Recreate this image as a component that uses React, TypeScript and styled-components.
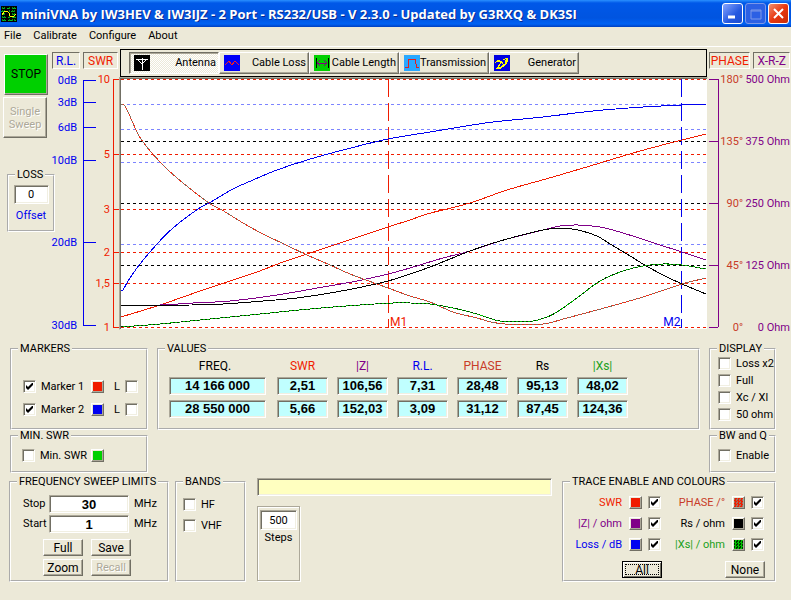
import React, { useState } from 'react';
import styled, { createGlobalStyle, css } from 'styled-components';

const C = {
  face: '#ECE9D8',
  light: '#FFFFFF',
  mid: '#ACA899',
  dark: '#716F64',
  red: '#F01C00',
  brown: '#C83C28',
  blue: '#0000F0',
  paleBlue: '#7C84FF',
  purple: '#800088',
  green: '#00D000',
  leaf: '#20A020',
};

const GlobalStyle = createGlobalStyle`
  html, body { margin: 0; padding: 0; background: ${C.face}; }
  *, *::before, *::after { box-sizing: border-box; }
  body, button, input, table { font-family: Roboto, "Liberation Sans", sans-serif; font-size: 11px; line-height: 12px; color: #000; }
`;

const sunken = css`
  border: 1px solid;
  border-color: ${C.mid} ${C.light} ${C.light} ${C.mid};
  box-shadow: inset 1px 1px ${C.dark}, inset -1px -1px #f1efe2;
`;
const raised = css`
  border: 1px solid;
  border-color: ${C.light} ${C.dark} ${C.dark} ${C.light};
  box-shadow: inset -1px -1px ${C.mid};
`;
const etched = css`
  border: 1px solid ${C.mid};
  box-shadow: 1px 1px #fff, inset 1px 1px #fff;
`;

const Window = styled.main`
  min-height: 100vh;
  background: ${C.face};
  display: flex;
  flex-direction: column;
`;

/* ---- title bar and menu ---- */
const TitleBar = styled.header`
  height: 27px;
  display: flex;
  align-items: center;
  gap: 4px;
  padding: 0 2px 0 1px;
  background: linear-gradient(#2a90ff 0, #0058e8 3px, #0054e0 18px, #0062f4 24px, #0040c0 27px);
`;
const Title = styled.h1`
  flex: 1;
  margin: 0;
  font-family: "Open Sans", sans-serif;
  font-size: 13px;
  line-height: 16px;
  font-weight: 700;
  color: #fff;
  text-shadow: 1px 1px #0a2a90;
  white-space: nowrap;
  overflow: hidden;
`;
const WindowButtons = styled.div`
  display: flex;
  gap: 2px;
`;
const WindowButton = styled.button<{ $bg: string; $dim?: boolean }>`
  width: 21px;
  height: 21px;
  padding: 0;
  border: 1px solid ${p => (p.$dim ? '#7c98e8' : '#fff')};
  border-radius: 3px;
  background: ${p => p.$bg};
  svg { display: block; margin: auto; }
`;
const Menu = styled.nav`
  display: flex;
  gap: 12px;
  height: 20px;
  padding: 3px 4px 0;
  border-bottom: 1px solid ${C.light};
`;
const MenuItem = styled.a`
  color: #000;
  text-decoration: none;
`;

/* ---- instrument area ---- */
const Instrument = styled.section`
  display: flex;
  align-items: flex-start;
  margin-bottom: 10px;
`;
const Side = styled.div`
  width: 51px;
  padding: 7px 0 0 3px;
  display: flex;
  flex-direction: column;
  gap: 2px;
  flex: none;
`;
const BigButton = styled.button<{ $go?: boolean }>`
  ${raised}
  width: 44px;
  height: 41px;
  margin-left: ${p => (p.$go ? '1px' : '0')};
  padding: 0;
  font-size: ${p => (p.$go ? '12px' : '11px')};
  line-height: 13px;
  background: ${p => (p.$go ? C.green : C.face)};
  &:disabled { color: ${C.mid}; text-shadow: 1px 1px #fff; }
`;
const Group = styled.fieldset`
  margin: 0;
  padding: 0;
  min-width: 0;
  border: 2px groove #fff;
`;
const Legend = styled.legend<{ $indent?: string }>`
  margin-left: ${p => p.$indent ?? '6px'};
  padding: 0 2px;
  font-size: 11px;
  line-height: 12px;
  height: 12px;
  white-space: nowrap;
`;
const GroupBody = styled.div<{ $pad: string }>`
  padding: ${p => p.$pad};
`;
const LossGroup = styled(Group)`
  width: 48px;
  margin: 29px 0 0 4px;
  padding: 4px 0 8px;
  label { color: ${C.blue}; display: flex; flex-direction: column; align-items: center; gap: 6px; }
`;
const Field = styled.input<{ $w: string; $h?: string; $bold?: boolean; $bg?: string }>`
  ${sunken}
  width: ${p => p.$w};
  height: ${p => p.$h ?? '18px'};
  padding: 0 2px;
  text-align: center;
  background: ${p => p.$bg ?? '#fff'};
  ${p => p.$bold && css`font-family: "Liberation Sans", sans-serif; font-size: 13px; font-weight: 700;`}
`;
const AxisColumn = styled.div<{ $w: string }>`
  flex: none;
  width: ${p => p.$w};
  padding-top: 5px;
  svg { display: block; }
`;
const AxisHeads = styled.div`
  display: flex;
  gap: 3px;
  padding: 0 1px;
`;
const AxisHead = styled.div<{ $color: string; $grow: number }>`
  border: 1px solid;
  border-color: ${C.dark} ${C.light} ${C.light} ${C.dark};
  flex: ${p => p.$grow} 1 0;
  height: 17px;
  line-height: 16px;
  font-size: 12px;
  text-align: center;
  white-space: nowrap;
  color: ${p => p.$color};
`;
const AxisText = styled.text`
  font-size: 11px;
  text-anchor: end;
`;
const ChartColumn = styled.div`
  flex: 1;
  min-width: 0;
  padding-top: 2px;
`;
const Toolbar = styled.div`
  display: flex;
  height: 28px;
  margin: 0 1px;
  padding: 2px 8px;
  border: 1px solid #000;
`;
const ToolButton = styled.button<{ $on: boolean }>`
  ${raised}
  width: 90px;
  height: 22px;
  padding: 0 2px 0 4px;
  display: flex;
  align-items: center;
  justify-content: space-between;
  white-space: nowrap;
  background: ${C.face};
  svg { flex: none; }
  ${p => p.$on && css`
    border-color: ${C.dark} ${C.light} ${C.light} ${C.dark};
    box-shadow: inset 1px 1px ${C.mid};
    background: repeating-conic-gradient(#fff 0 25%, ${C.face} 0 50%) 0 0 / 2px 2px;
  `}
`;
const Plot = styled.div`
  position: relative;
  border: 1px solid;
  border-color: ${C.mid} ${C.face} ${C.face} ${C.mid};
  background: #fff;
  > svg { display: block; width: 100%; height: 251px; }
`;
const MarkerTag = styled.span<{ $color: string; $left?: string; $right?: string }>`
  position: absolute;
  bottom: 1px;
  left: ${p => p.$left ?? 'auto'};
  right: ${p => p.$right ?? 'auto'};
  font-size: 12px;
  color: ${p => p.$color};
`;

/* ---- lower panels ---- */
const PanelRow = styled.section`
  display: flex;
  gap: 9px;
  padding: 0 15px 0 10px;
`;
const Controls = styled.section`
  display: flex;
  padding: 3px 15px 0 9px;
`;
const Stack = styled.div<{ $w?: string }>`
  flex: ${p => (p.$w ? 'none' : '1')};
  width: ${p => p.$w ?? 'auto'};
  min-width: 0;
  display: flex;
  flex-direction: column;
`;
const List = styled.div<{ $gap: string }>`
  display: flex;
  flex-direction: column;
  gap: ${p => p.$gap};
`;
const Line = styled.div`
  display: flex;
  align-items: center;
  height: 13px;
`;
const CheckLabel = styled.label<{ $w?: string }>`
  display: flex;
  align-items: center;
  gap: 5px;
  height: 13px;
  width: ${p => p.$w ?? 'auto'};
  white-space: nowrap;
`;
const Tick = styled.input.attrs({ type: 'checkbox' })`
  ${sunken}
  appearance: none;
  flex: none;
  width: 13px;
  height: 13px;
  margin: 0;
  background: #fff;
  &:checked {
    background: #fff url("data:image/svg+xml,%3Csvg xmlns='http://www.w3.org/2000/svg' width='7' height='7'%3E%3Cpath d='M0 2v3l2 2 5-5V-1L2 4z'/%3E%3C/svg%3E") 2px 2px no-repeat;
  }
`;
const Swatch = styled.button<{ $color: string; $mix?: string }>`
  ${raised}
  flex: none;
  width: 13px;
  height: 13px;
  padding: 1px;
  background: ${p => p.$mix
    ? `repeating-conic-gradient(${p.$color} 0 25%, ${p.$mix} 0 50%) 0 0 / 3px 3px content-box`
    : `${p.$color} content-box`};
`;
const LockLabel = styled(CheckLabel)`
  margin-left: 10px;
`;
const Readings = styled.table`
  border-spacing: 9px 5px;
  th, td { padding: 0; }
  th { height: 12px; font-weight: 400; font-size: 12px; }
  th:first-child { width: 99px; padding-right: 7px; }
`;
const Head = styled.th<{ $color: string }>`
  color: ${p => p.$color};
`;
const Reading = styled.output<{ $w: string }>`
  ${sunken}
  display: block;
  width: ${p => p.$w};
  height: 18px;
  line-height: 16px;
  text-align: center;
  font-family: "Liberation Sans", sans-serif;
  font-size: 13px;
  font-weight: 700;
  background: #c0ffff;
`;
const SweepGroup = styled(Group)`
  flex: none;
  width: 160px;
`;
const SweepGrid = styled.div`
  display: grid;
  grid-template-columns: 26px 80px auto;
  row-gap: 2px;
  align-items: center;
`;
const Unit = styled.span`
  padding-left: 5px;
`;
const ButtonGrid = styled.div`
  display: grid;
  grid-template-columns: 40px 40px;
  gap: 3px 8px;
  margin: 6px 0 0 20px;
`;
const PushButton = styled.button<{ $default?: boolean }>`
  ${raised}
  width: 40px;
  height: 17px;
  padding: 0;
  font-size: ${p => (p.disabled ? '11px' : '12px')};
  background: ${C.face};
  &:disabled { color: ${C.mid}; text-shadow: 1px 1px #fff; }
  ${p => p.$default && css`
    border-color: #000;
    outline: 1px dotted #000;
    outline-offset: -4px;
    box-shadow: inset 1px 1px #fff, inset -1px -1px ${C.dark};
  `}
`;
const BandsGroup = styled(Group)`
  flex: none;
  width: 71px;
  margin-left: 6px;
`;
const Center = styled.div`
  flex: 1;
  min-width: 0;
  display: flex;
  flex-direction: column;
  align-items: flex-start;
  gap: 10px;
  padding: 2px 10px 0 11px;
`;
const Steps = styled.label`
  ${etched}
  flex: 1;
  width: 43px;
  margin-bottom: 1px;
  padding: 3px 2px;
  display: flex;
  flex-direction: column;
  align-items: center;
  gap: 2px;
`;
const TraceGroup = styled(Group)`
  flex: none;
  width: 214px;
`;
const TraceGrid = styled.div`
  display: grid;
  grid-template-columns: 97px 99px;
  gap: 8px 4px;
`;
const TraceItem = styled.div`
  display: flex;
  align-items: center;
  justify-content: flex-end;
  gap: 6px;
  height: 13px;
`;
const TraceName = styled.label<{ $color: string }>`
  margin-right: 1px;
  color: ${p => p.$color};
  white-space: nowrap;
`;
const TraceButtons = styled.div`
  display: flex;
  justify-content: space-between;
  margin-top: 10px;
  padding: 0 9px 0 58px;
`;

/* ---- drawings ---- */
const AppIcon = () => (
  <svg width="16" height="16" viewBox="0 0 16 16" shapeRendering="crispEdges">
    <rect width="16" height="16" fill="#000" />
    <path d="M1 2h3M6 2h3M11 2h4M0 5h3M5 5h2M10 5h3M1 8h2M12 8h3M2 11h3M7 11h2M12 11h3M1 14h4M7 14h4M13 14h2" stroke="#00c020" />
    <path d="M3 1v14M8 1v14M13 1v14M1 1v14M11 1v14" stroke="#009018" strokeDasharray="2 1" />
    <path d="M1 9L3 6L6 5L8 7L9 10L12 11L15 8" fill="none" stroke="#ff0" />
  </svg>
);
const AntennaIcon = () => (
  <svg width="16" height="16" viewBox="0 0 16 16" shapeRendering="crispEdges">
    <rect width="16" height="16" fill="#000" />
    <path d="M2 4h12M8 3v12M3 4l5 5M13 4l-5 5" stroke="#fff" fill="none" />
  </svg>
);
const LossIcon = () => (
  <svg width="16" height="16" viewBox="0 0 16 16" shapeRendering="crispEdges">
    <rect width="16" height="16" fill="#0000f8" />
    <path d="M1 9h1l3-3l3 4l3-4l3 3h1" stroke="#f02020" fill="none" />
  </svg>
);
const LengthIcon = () => (
  <svg width="16" height="16" viewBox="0 0 16 16" shapeRendering="crispEdges">
    <rect width="16" height="16" fill="#00d000" />
    <path d="M2 3v10M14 3v10" stroke="#000" />
    <path d="M3 8h10M6 5l-3 3l3 3M10 5l3 3l-3 3" stroke="#800080" fill="none" />
  </svg>
);
const PulseIcon = () => (
  <svg width="16" height="16" viewBox="0 0 16 16" shapeRendering="crispEdges">
    <rect width="16" height="16" fill="#28a8ff" />
    <path d="M1 12h3v-3l1-5h6l1 5v3h3" stroke="#e02020" fill="none" />
  </svg>
);
const GeneratorIcon = () => (
  <svg width="16" height="16" viewBox="0 0 16 16" shapeRendering="crispEdges">
    <rect width="16" height="16" fill="#0000e0" />
    <path d="M1 8l2-2h3l1 2l-4 5h4l5-4l1-5M7 6l2 3h3M9 5l4-2l1 4" stroke="#ff0" fill="none" />
    <path d="M2 7l2-2h2M4 12h3l4-3l1-4" stroke="#ff0" fill="none" />
  </svg>
);

type AxisMark = [number, string];
const rlMarks: AxisMark[] = [[1, '0dB'], [23, '3dB'], [48, '6dB'], [81, '10dB'], [163, '20dB'], [246, '30dB']];
const swrMarks: AxisMark[] = [[0, '10'], [75, '5'], [130, '3'], [173, '2'], [204, '1,5'], [248, '1']];
const rightMarks: [number, string, string][] = [
  [0, '180°', '500 Ohm'], [62, '135°', '375 Ohm'], [124, '90°', '250 Ohm'], [186, '45°', '125 Ohm'], [248, '0°', '0 Ohm'],
];

const LeftAxes = () => (
  <svg width="68" height="264" viewBox="0 -10 68 264">
    <g stroke={C.blue} shapeRendering="crispEdges">
      <path d="M32 1V246" />
      {rlMarks.map(([y]) => <path key={y} d={`M32 ${y}H45`} />)}
    </g>
    <g stroke={C.red} shapeRendering="crispEdges">
      <path d="M62 0V248" />
      {swrMarks.map(([y]) => <path key={y} d={`M62 ${y}H68`} />)}
    </g>
    {rlMarks.map(([y, t]) => <AxisText key={t} x="26" y={y + 4} fill={C.blue}>{t}</AxisText>)}
    {swrMarks.map(([y, t]) => <AxisText key={t} x="59" y={y + 4} fill={C.red}>{t}</AxisText>)}
  </svg>
);
const RightAxes = () => (
  <svg width="83" height="264" viewBox="0 -10 83 264">
    <g stroke={C.purple} shapeRendering="crispEdges">
      <path d="M10 0V248" />
      {rightMarks.map(([y]) => <path key={y} d={`M1 ${y}H10`} />)}
    </g>
    {rightMarks.map(([y, deg, ohm]) => (
      <g key={y}>
        <AxisText x="35" y={y + 4} fill={C.brown}>{deg}</AxisText>
        <AxisText x="82" y={y + 4} fill={C.purple}>{ohm}</AxisText>
      </g>
    ))}
  </svg>
);

const gridLines: [string, number[]][] = [
  [C.paleBlue, [104, 129, 162, 244]],
  ['#000', [141, 203, 265]],
  [C.red, [79, 154, 209, 252, 283, 327]],
];
const curves: { color: string; mix?: string; points: string }[] = [
  { color: C.red, points: '121,317 160,305 203,290 257,272 283,262 307,254 343,242 388,227 410,220 427,214 470,203 507,190 553,177 600,163 640,151 682,140 706,134' },
  { color: C.blue, points: '121,291 123,290 128,281 140,264 157,244 173,228 198,209 209,203 233,189 253,180 277,170 307,160 343,150 388,139 430,132 460,127 493,122 543,117 593,111 643,107 682,105 706,104' },
  { color: C.purple, points: '121,305 160,305 193,303 230,301 277,295 323,287 357,281 388,274 410,268 443,258 470,251 500,241 543,230 560,226 578,225 600,227 623,233 657,244 682,252 706,260' },
  { color: '#000', points: '121,305 192,305 223,304 263,301 297,298 330,293 357,288 388,281 410,274 430,267 450,259 470,251 500,241 543,230 562,228 578,230 597,236 610,244 627,254 643,264 663,275 682,284 706,294' },
  { color: '#f03018', mix: '#807060', points: '121,104 125,106 137,132 143,142 160,162 177,178 209,203 222,210 243,223 263,234 284,244 307,255 330,265 350,274 377,284 388,288 410,296 430,302 453,312 477,318 491,322 505,324 543,324 567,318 597,310 643,297 682,284 706,278' },
  { color: '#00c000', mix: '#003000', points: '121,327 160,324 210,319 260,314 310,309 360,305 393,303 410,303 430,304 453,308 477,314 500,321 533,321 547,317 557,312 577,298 600,281 623,271 643,266 663,264 682,265 706,269' },
];

/* Joins the sample points with a Catmull-Rom spline. */
const smooth = (points: string) => {
  const p = points.split(' ').map(s => s.split(',').map(Number));
  let d = `M${p[0].join(' ')}`;
  for (let i = 0; i < p.length - 1; i++) {
    const a = p[Math.max(0, i - 1)];
    const b = p[i];
    const c = p[i + 1];
    const e = p[Math.min(p.length - 1, i + 2)];
    const span = (c[0] - b[0]) / 3;
    const m1 = (c[1] - a[1]) / (c[0] - a[0]);
    const m2 = (e[1] - b[1]) / (e[0] - b[0]);
    d += `C${b[0] + span} ${b[1] + m1 * span} ${c[0] - span} ${c[1] - m2 * span} ${c[0]} ${c[1]}`;
  }
  return d;
};

const Chart = () => (
  <svg viewBox="120 78 587 251" preserveAspectRatio="none" shapeRendering="crispEdges" fill="none" role="img" aria-label="Antenna sweep">
    <path d="M707 78H120V329" stroke={C.dark} strokeWidth="2" />
    {gridLines.map(([color, ys]) => ys.map(y => (
      <path key={y} d={`M121 ${y}H706`} stroke={color} strokeDasharray="3 3" vectorEffect="non-scaling-stroke" />
    )))}
    <path d="M388 79V328" stroke={C.red} strokeDasharray="18 6" vectorEffect="non-scaling-stroke" />
    <path d="M681 79V328" stroke={C.blue} strokeDasharray="18 6" vectorEffect="non-scaling-stroke" />
    {curves.map(c => (
      <g key={c.points}>
        <path d={smooth(c.points)} stroke={c.color} vectorEffect="non-scaling-stroke" />
        {c.mix && <path d={smooth(c.points)} stroke={c.mix} strokeDasharray="2 2" vectorEffect="non-scaling-stroke" />}
      </g>
    ))}
  </svg>
);

const modes = [
  { name: 'Antenna', Icon: AntennaIcon },
  { name: 'Cable Loss', Icon: LossIcon },
  { name: 'Cable Length', Icon: LengthIcon },
  { name: 'Transmission', Icon: PulseIcon },
  { name: 'Generator', Icon: GeneratorIcon },
];
const columns: [string, string][] = [
  ['FREQ.', '#000'], ['SWR', C.red], ['|Z|', C.purple], ['R.L.', C.blue], ['PHASE', C.brown], ['Rs', '#000'], ['|Xs|', C.leaf],
];
const readings = [
  ['14 166 000', '2,51', '106,56', '7,31', '28,48', '95,13', '48,02'],
  ['28 550 000', '5,66', '152,03', '3,09', '31,12', '87,45', '124,36'],
];
const traces = [
  { name: 'SWR', text: C.red, color: C.red },
  { name: 'PHASE /°', text: C.brown, color: C.red, mix: '#a07060' },
  { name: '|Z| / ohm', text: C.purple, color: C.purple },
  { name: 'Rs / ohm', text: '#000', color: '#000' },
  { name: 'Loss / dB', text: C.blue, color: C.blue },
  { name: '|Xs| / ohm', text: C.leaf, color: '#00c000', mix: '#003000' },
];

const Check = ({ text, on = false, width }: { text: string; on?: boolean; width?: string }) => (
  <CheckLabel $w={width}><Tick defaultChecked={on} />{text}</CheckLabel>
);

export default function App() {
  const [mode, setMode] = useState('Antenna');
  const [shown, setShown] = useState<boolean[]>(traces.map(() => true));

  return (
    <Window>
      <GlobalStyle />
      <TitleBar>
        <AppIcon />
        <Title>miniVNA by IW3HEV &amp; IW3IJZ - 2 Port - RS232/USB - V 2.3.0 - Updated by G3RXQ &amp; DK3SI</Title>
        <WindowButtons>
          <WindowButton aria-label="Minimize" $bg="linear-gradient(135deg, #86a4ff, #2458e0 60%, #1c4cd0)">
            <svg width="17" height="17"><path d="M4 12h7" stroke="#fff" strokeWidth="3" /></svg>
          </WindowButton>
          <WindowButton aria-label="Maximize" $dim $bg="#2c60e4">
            <svg width="17" height="17" fill="none" stroke="#7c98e8"><path d="M4 5h10v9H4zM4 6h10" /></svg>
          </WindowButton>
          <WindowButton aria-label="Close" $bg="linear-gradient(135deg, #f09070, #e83810 50%, #c82c08)">
            <svg width="17" height="17"><path d="M4 4l9 9M13 4l-9 9" stroke="#fff" strokeWidth="2" /></svg>
          </WindowButton>
        </WindowButtons>
      </TitleBar>
      <Menu>
        {['File', 'Calibrate', 'Configure', 'About'].map(m => <MenuItem key={m} href="#">{m}</MenuItem>)}
      </Menu>

      <Instrument>
        <Side>
          <BigButton $go>STOP</BigButton>
          <BigButton disabled>Single<br />Sweep</BigButton>
          <LossGroup>
            <Legend>LOSS</Legend>
            <label>
              <Field $w="35px" $h="19px" defaultValue="0" />
              Offset
            </label>
          </LossGroup>
        </Side>
        <AxisColumn $w="68px">
          <AxisHeads>
            <AxisHead $color={C.blue} $grow={28}>R.L.</AxisHead>
            <AxisHead $color={C.red} $grow={35}>SWR</AxisHead>
          </AxisHeads>
          <LeftAxes />
        </AxisColumn>
        <ChartColumn>
          <Toolbar role="toolbar">
            {modes.map(({ name, Icon }) => (
              <ToolButton key={name} $on={mode === name} aria-pressed={mode === name} onClick={() => setMode(name)}>
                <Icon />
                {name}
              </ToolButton>
            ))}
          </Toolbar>
          <Plot>
            <Chart />
            <MarkerTag $color={C.red} $left="46%">M1</MarkerTag>
            <MarkerTag $color={C.blue} $right="calc(4% + 3px)">M2</MarkerTag>
          </Plot>
        </ChartColumn>
        <AxisColumn $w="83px">
          <AxisHeads>
            <AxisHead $color={C.red} $grow={41}>PHASE</AxisHead>
            <AxisHead $color={C.purple} $grow={36}>X-R-Z</AxisHead>
          </AxisHeads>
          <RightAxes />
        </AxisColumn>
      </Instrument>

      <PanelRow>
        <Stack $w="138px">
          <Group>
            <Legend>MARKERS</Legend>
            <GroupBody $pad="25px 8px 12px 11px">
              <List $gap="10px">
                {[['Marker 1', C.red], ['Marker 2', C.blue]].map(([name, color]) => (
                  <Line key={name}>
                    <Check text={name} on width="69px" />
                    <Swatch $color={color} aria-label={`${name} colour`} />
                    <LockLabel>L<Tick /></LockLabel>
                  </Line>
                ))}
              </List>
            </GroupBody>
          </Group>
          <Group>
            <Legend>MIN. SWR</Legend>
            <GroupBody $pad="7px 8px 9px 10px">
              <Line>
                <Check text="Min. SWR" width="69px" />
                <Swatch $color={C.green} aria-label="Min. SWR colour" />
              </Line>
            </GroupBody>
          </Group>
        </Stack>
        <Stack>
          <Group>
            <Legend>VALUES</Legend>
            <GroupBody $pad="0 0 5px 1px">
              <Readings>
                <thead>
                  <tr>{columns.map(([name, color]) => <Head key={name} $color={color}>{name}</Head>)}</tr>
                </thead>
                <tbody>
                  {readings.map(row => (
                    <tr key={row[0]}>
                      {row.map((v, i) => <td key={i}><Reading $w={i ? '51px' : '97px'}>{v}</Reading></td>)}
                    </tr>
                  ))}
                </tbody>
              </Readings>
            </GroupBody>
          </Group>
        </Stack>
        <Stack $w="67px">
          <Group>
            <Legend>DISPLAY</Legend>
            <GroupBody $pad="2px 0 7px 7px">
              <List $gap="4px">
                {['Loss x2', 'Full', 'Xc / Xl', '50 ohm'].map(t => <Check key={t} text={t} />)}
              </List>
            </GroupBody>
          </Group>
          <Group>
            <Legend>BW and Q</Legend>
            <GroupBody $pad="7px 0 9px 7px">
              <Check text="Enable" />
            </GroupBody>
          </Group>
        </Stack>
      </PanelRow>

      <Controls>
        <SweepGroup>
          <Legend>FREQUENCY SWEEP LIMITS</Legend>
          <GroupBody $pad="7px 0 4px 12px">
            <SweepGrid>
              <label htmlFor="stop">Stop</label>
              <Field id="stop" $w="80px" $bold defaultValue="30" />
              <Unit>MHz</Unit>
              <label htmlFor="start">Start</label>
              <Field id="start" $w="80px" $bold defaultValue="1" />
              <Unit>MHz</Unit>
            </SweepGrid>
            <ButtonGrid>
              <PushButton>Full</PushButton>
              <PushButton>Save</PushButton>
              <PushButton>Zoom</PushButton>
              <PushButton disabled>Recall</PushButton>
            </ButtonGrid>
          </GroupBody>
        </SweepGroup>
        <BandsGroup>
          <Legend>BANDS</Legend>
          <GroupBody $pad="10px 0 0 6px">
            <List $gap="8px">
              <Check text="HF" />
              <Check text="VHF" />
            </List>
          </GroupBody>
        </BandsGroup>
        <Center>
          <Field $w="100%" $bg="#ffffc0" aria-label="Message" readOnly />
          <Steps>
            <Field $w="37px" $h="20px" defaultValue="500" />
            Steps
          </Steps>
        </Center>
        <TraceGroup>
          <Legend>TRACE ENABLE AND COLOURS</Legend>
          <GroupBody $pad="8px 0 2px 0">
            <TraceGrid>
              {traces.map((t, i) => (
                <TraceItem key={t.name}>
                  <TraceName $color={t.text} htmlFor={`trace-${i}`}>{t.name}</TraceName>
                  <Swatch $color={t.color} $mix={t.mix} aria-label={`${t.name} colour`} />
                  <Tick
                    id={`trace-${i}`}
                    checked={shown[i]}
                    onChange={() => setShown(shown.map((s, k) => (k === i ? !s : s)))}
                  />
                </TraceItem>
              ))}
            </TraceGrid>
            <TraceButtons>
              <PushButton $default onClick={() => setShown(traces.map(() => true))}>All</PushButton>
              <PushButton onClick={() => setShown(traces.map(() => false))}>None</PushButton>
            </TraceButtons>
          </GroupBody>
        </TraceGroup>
      </Controls>
    </Window>
  );
}
